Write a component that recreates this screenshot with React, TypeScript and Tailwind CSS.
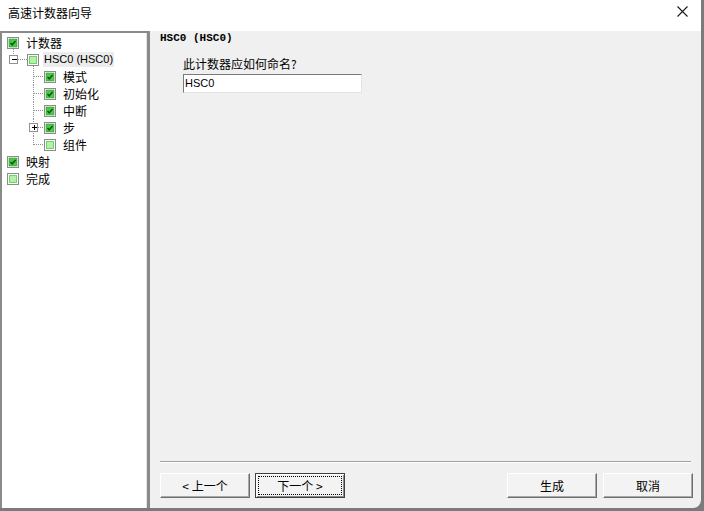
import React from "react";

const cjk = { fontFamily: '"Noto Sans CJK SC", "Liberation Sans", sans-serif' };

function Box({ checked, x }: { checked: boolean; x: number }) {
    return (
        <g transform={`translate(${x},3)`}>
            <rect x="0.5" y="0.5" width="11" height="11" fill="#ffffff" stroke="#8c8c8c" />
            {checked ? (
                <>
                    <rect x="2" y="2" width="8" height="8" fill="#4cc94c" stroke="#2f9a2f" strokeWidth="0.6" />
                    <path d="M3.5 6 L5.2 7.8 L8.6 3.9" fill="none" stroke="#0c5a0c" strokeWidth="1.5" />
                </>
            ) : (
                <>
                    <rect x="2" y="2" width="8" height="8" fill="#66d866" />
                    <rect x="3" y="3" width="6" height="6" fill="#b6f0a8" />
                </>
            )}
        </g>
    );
}

function Dot({ x1, y1, x2, y2 }: { x1: number; y1: number; x2: number; y2: number }) {
    return (
        <line x1={x1} y1={y1} x2={x2} y2={y2} stroke="#8f8f8f" strokeDasharray="1 1" shapeRendering="crispEdges" />
    );
}

function Expander({ cx, open }: { cx: number; open: boolean }) {
    return (
        <g>
            <rect x={cx - 4} y="4.5" width="8" height="8" fill="#ffffff" stroke="#909090" shapeRendering="crispEdges" />
            <line x1={cx - 2} y1="8.5" x2={cx + 3} y2="8.5" stroke="#000" shapeRendering="crispEdges" />
            {!open && <line x1={cx + 0.5} y1="6" x2={cx + 0.5} y2="11" stroke="#000" shapeRendering="crispEdges" />}
        </g>
    );
}

function RootRow({ label, checked, tail }: { label: string; checked: boolean; tail?: boolean }) {
    return (
        <div className="flex items-center h-[17px]">
            <svg width="17" height="17" className="shrink-0">
                <Box checked={checked} x={5} />
                {tail && <Dot x1={11.5} y1={15} x2={11.5} y2={17} />}
            </svg>
            <span className="ml-[7px] text-[12px] leading-[17px] text-black" style={cjk}>{label}</span>
        </div>
    );
}

function ChildRow({ label, checked, last, expander }: { label: string; checked: boolean; last?: boolean; expander?: boolean }) {
    return (
        <div className="flex items-center h-[17px]">
            <svg width="54" height="17" className="shrink-0">
                <Dot x1={31.5} y1={0} x2={31.5} y2={last ? 9 : 17} />
                <Dot x1={expander ? 36 : 32} y1={8.5} x2={42} y2={8.5} />
                {expander && <Expander cx={31.5} open={false} />}
                <Box checked={checked} x={42} />
            </svg>
            <span className="ml-[7px] text-[12px] leading-[17px] text-black" style={cjk}>{label}</span>
        </div>
    );
}

function Btn({ label, primary }: { label: string; primary?: boolean }) {
    return (
        <button
            className={
                "w-[90px] h-[25px] flex items-center justify-center bg-[#f3f3f3] text-[12px] text-black " +
                (primary
                    ? "border border-[#404040] shadow-[inset_1px_1px_0_#ffffff,inset_-1px_-1px_0_#8a8a8a]"
                    : "border border-t-white border-l-white border-r-[#6e6e6e] border-b-[#6e6e6e] shadow-[inset_-1px_-1px_0_#a9a9a9]")
            }
            style={cjk}
        >
            {primary ? (
                <span className="w-[84px] h-[19px] border border-dotted border-black flex items-center justify-center">{label}</span>
            ) : (
                label
            )}
        </button>
    );
}

export default function App() {
    return (
        <div className="w-[704px] h-[511px] bg-[#7b7b7b] overflow-hidden">
            <div className="w-[701px] h-[508px] bg-[#f0f0f0] rounded-br-[8px] flex flex-col overflow-hidden">
                <div className="h-[31px] shrink-0 bg-white flex items-center justify-between pl-[8px] pr-[13px]">
                    <span className="text-[12px] text-black mt-[-6px]" style={cjk}>高速计数器向导</span>
                    <svg width="11" height="11" className="mt-[-8px]">
                        <path d="M0.5 0.5 L10.5 10.5 M10.5 0.5 L0.5 10.5" stroke="#1a1a1a" strokeWidth="1.1" />
                    </svg>
                </div>
                <div className="flex-1 flex min-h-0">
                    <div className="w-[150px] shrink-0 bg-white border-t-2 border-l-2 border-[#8a8a8a] border-r-[3px] border-r-[#8a8a8a] shadow-[inset_-1px_0_0_#e3e3e3] pt-[1px]">
                        <RootRow label="计数器" checked tail />
                        <div className="flex items-center h-[17px]">
                            <svg width="37" height="17" className="shrink-0">
                                <Dot x1={11.5} y1={0} x2={11.5} y2={4} />
                                <Expander cx={11.5} open />
                                <Dot x1={16} y1={8.5} x2={25} y2={8.5} />
                                <Box checked={false} x={25} />
                                <Dot x1={31.5} y1={15} x2={31.5} y2={17} />
                            </svg>
                            <span className="ml-[4px] px-[1px] bg-[#ececec] text-[11px] leading-[15px] text-black" style={{ fontFamily: '"Liberation Sans", sans-serif' }}>HSC0 (HSC0)</span>
                        </div>
                        <ChildRow label="模式" checked />
                        <ChildRow label="初始化" checked />
                        <ChildRow label="中断" checked />
                        <ChildRow label="步" checked expander />
                        <ChildRow label="组件" checked={false} last />
                        <RootRow label="映射" checked />
                        <RootRow label="完成" checked={false} />
                    </div>
                    <div className="flex-1 flex flex-col pl-[10px] pr-[8px] pb-[10px]">
                        <div className="h-[14px] leading-[14px] text-[11px] font-bold text-black" style={{ fontFamily: '"Liberation Mono", monospace' }}>
                            HSC0 (HSC0)
                        </div>
                        <div className="ml-[23px] mt-[11px] h-[16px] leading-[16px] text-[12px] text-black" style={cjk}>此计数器应如何命名?</div>
                        <div className="ml-[23px] mt-[2px] w-[179px] h-[19px] bg-white border border-t-[#7a7a7a] border-l-[#7a7a7a] border-r-[#e3e3e3] border-b-[#e3e3e3] flex items-center pl-[1px] text-[11px] text-black" style={{ fontFamily: '"Liberation Sans", sans-serif' }}>
                            HSC0
                        </div>
                        <div className="flex-1" />
                        <div className="h-[2px] mr-[2px] border-t border-[#a0a0a0] border-b border-b-white" />
                        <div className="mt-[10px] flex items-center">
                            <Btn label="< 上一个" />
                            <div className="ml-[5px]">
                                <Btn label="下一个 >" primary />
                            </div>
                            <div className="flex-1" />
                            <Btn label="生成" />
                            <div className="ml-[6px]">
                                <Btn label="取消" />
                            </div>
                        </div>
                    </div>
                </div>
            </div>
        </div>
    );
}
